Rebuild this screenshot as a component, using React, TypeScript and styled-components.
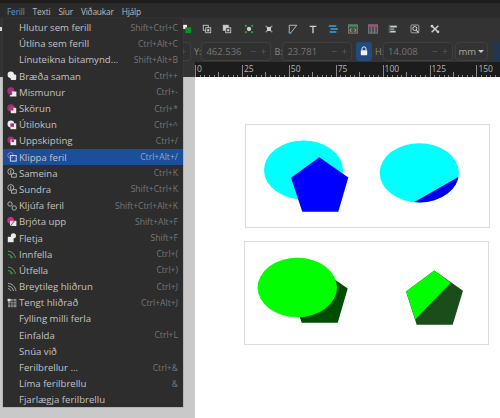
import React from 'react';
import styled, { createGlobalStyle } from 'styled-components';

type TGlyph = 'union' | 'diff' | 'inter' | 'excl' | 'div' | 'clip' | 'comb' | 'split' | 'cut' | 'frag' | 'flat' | 'inset' | 'dyn' | 'link';

interface IMenuItem {
  label: string;
  keys?: string;
  glyph?: TGlyph;
  active?: boolean;
}

const MENU_ITEMS: IMenuItem[] = [
  { label: 'Hlutur sem ferill', keys: 'Shift+Ctrl+C' },
  { label: 'Útlína sem ferill', keys: 'Ctrl+Alt+C' },
  { label: 'Línuteikna bitamynd...', keys: 'Shift+Alt+B' },
  { label: 'Bræða saman', keys: 'Ctrl++', glyph: 'union' },
  { label: 'Mismunur', keys: 'Ctrl+-', glyph: 'diff' },
  { label: 'Skörun', keys: 'Ctrl+*', glyph: 'inter' },
  { label: 'Útilokun', keys: 'Ctrl+^', glyph: 'excl' },
  { label: 'Uppskipting', keys: 'Ctrl+/', glyph: 'div' },
  { label: 'Klippa feril', keys: 'Ctrl+Alt+/', glyph: 'clip', active: true },
  { label: 'Sameina', keys: 'Ctrl+K', glyph: 'comb' },
  { label: 'Sundra', keys: 'Shift+Ctrl+K', glyph: 'split' },
  { label: 'Kljúfa feril', keys: 'Shift+Ctrl+Alt+K', glyph: 'cut' },
  { label: 'Brjóta upp', keys: 'Shift+Alt+F', glyph: 'frag' },
  { label: 'Fletja', keys: 'Shift+F', glyph: 'flat' },
  { label: 'Innfella', keys: 'Ctrl+(', glyph: 'inset' },
  { label: 'Útfella', keys: 'Ctrl+)', glyph: 'inset' },
  { label: 'Breytileg hliðrun', keys: 'Ctrl+J', glyph: 'dyn' },
  { label: 'Tengt hliðrað', keys: 'Ctrl+Alt+J', glyph: 'link' },
  { label: 'Fylling milli ferla' },
  { label: 'Einfalda', keys: 'Ctrl+L' },
  { label: 'Snúa við' },
  { label: 'Ferilbrellur ...', keys: 'Ctrl+&' },
  { label: 'Líma ferilbrellu', keys: '&' },
  { label: 'Fjarlægja ferilbrellu' },
];

const MENU_BAR = ['Ferill', 'Texti', 'Síur', 'Viðaukar', 'Hjálp'];

function MenuGlyph({ kind }: { kind: TGlyph }) {
  const pink = '#a82c74';
  const white = '#ececec';
  const line = '#b8b8b8';
  let body: React.ReactNode = null;
  if (kind === 'union') {
    body = <><circle cx="3.8" cy="3.8" r="3.2" fill={white} /><rect x="3.6" y="3.6" width="5.6" height="5.4" rx="1" fill={white} /></>;
  } else if (kind === 'diff') {
    body = <><circle cx="3.9" cy="3.9" r="3.6" fill={pink} /><path d="M4.4 4.4h5v5h-6.6v-1.2c1.5 0 2.4-.8 2.6-2z" fill={white} /></>;
  } else if (kind === 'inter') {
    body = <><circle cx="4" cy="4" r="3.7" fill={pink} /><rect x="3.8" y="3.8" width="5.4" height="5.4" fill="#e8e8e8" /><rect x="3.8" y="3.8" width="2.6" height="2.6" fill={pink} /></>;
  } else if (kind === 'excl') {
    body = <><circle cx="3.9" cy="3.9" r="3.4" fill={white} /><rect x="3.4" y="3.4" width="5.8" height="5.8" fill={white} /><rect x="3.4" y="3.4" width="3.6" height="3.4" fill={pink} /></>;
  } else if (kind === 'div') {
    body = <><circle cx="3.8" cy="3.8" r="3.4" fill={pink} /><rect x="3.5" y="3.5" width="5.7" height="5.7" fill={white} /><rect x="4.5" y="3.5" width="2.6" height="2.6" fill={pink} /></>;
  } else if (kind === 'clip') {
    body = <><circle cx="3.6" cy="3.4" r="2.8" fill="none" stroke="#b26ad8" strokeWidth="1" /><rect x="3.4" y="3.5" width="5.8" height="5.6" fill="none" stroke="#cfe0f5" strokeWidth="1" /></>;
  } else if (kind === 'comb' || kind === 'split') {
    body = <><circle cx="3.8" cy="3.6" r="3" fill="none" stroke={line} strokeWidth="0.9" /><path d="M3.8 1.8v4.4M5.4 5.6h3.9v3.6h-4.8V7" fill="none" stroke={line} strokeWidth="0.9" /></>;
  } else if (kind === 'cut') {
    body = <><circle cx="3" cy="3" r="2.2" fill="none" stroke={line} strokeWidth="0.9" /><circle cx="7.2" cy="7" r="2.2" fill="none" stroke={line} strokeWidth="0.9" /></>;
  } else if (kind === 'frag') {
    body = <><circle cx="3.6" cy="3.4" r="3.3" fill="#d02a8c" /><rect x="3" y="3.8" width="6.4" height="5.2" fill={white} /><path d="M3 9l4-5.2h1L4 9z" fill={pink} /></>;
  } else if (kind === 'flat') {
    body = <><circle cx="6.4" cy="2.8" r="2.6" fill={white} /><rect x="0.8" y="3.8" width="5.8" height="5.4" fill={white} /></>;
  } else if (kind === 'inset') {
    body = <><path d="M1 2.2c3.6 0 6.6 2.8 7.4 6.6" fill="none" stroke="#8c8c8c" strokeWidth="1" /><path d="M1 5c2.4 0 4.6 1.8 5.2 4.2H3.6L2.8 6.8 1 6z" fill="#2f8f3a" /></>;
  } else if (kind === 'dyn') {
    body = <><path d="M1 1.4c4 0 7.2 3.2 8 7.6M1 4c2.8 0 5 2.2 5.6 5M1 6.6c1.4 0 2.6 1.2 3 2.6" fill="none" stroke="#a8a8a8" strokeWidth="1" /></>;
  } else if (kind === 'link') {
    body = <><rect x="1" y="1" width="8.4" height="8.2" fill="#8e8e8e" /><path d="M1 3.4h8.4M1 6h8.4M3.6 1v8.2M6.2 1v8.2" stroke="#2c2c2c" strokeWidth="0.7" /><rect x="0.6" y="0.8" width="3" height="2.6" fill="#e0e0e0" /></>;
  }
  return <svg width="10" height="10" viewBox="0 0 10 10">{body}</svg>;
}

type TTool = 'stack' | 'up' | 'down' | 'nodes' | 'nodes2' | 'pen' | 'text' | 'layers' | 'xml' | 'panel' | 'align' | 'find' | 'prefs';

function ToolGlyph({ kind }: { kind: TTool }) {
  const light = '#cfcfcf';
  let body: React.ReactNode = null;
  if (kind === 'stack') {
    body = <><rect x="1" y="1" width="5" height="5" fill="#ececec" /><rect x="4" y="4" width="7" height="7" fill="#0f8f28" /></>;
  } else if (kind === 'up' || kind === 'down') {
    body = <><rect x="1.5" y="1.5" width="6" height="6" fill={kind === 'up' ? 'none' : light} stroke={light} /><rect x="4.5" y="4.5" width="6" height="6" fill="#333" stroke={light} /><rect x="6.2" y="6.2" width="2.6" height="2.6" fill={light} /></>;
  } else if (kind === 'nodes') {
    body = <><rect x="1" y="1" width="2.4" height="2.4" fill="#2a9a46" /><rect x="8.6" y="1" width="2.4" height="2.4" fill="#2a9a46" /><rect x="1" y="8.6" width="2.4" height="2.4" fill="#2a9a46" /><rect x="8.6" y="8.6" width="2.4" height="2.4" fill="#2a9a46" /><circle cx="6" cy="6" r="2.6" fill={light} /></>;
  } else if (kind === 'nodes2') {
    body = <><path d="M2 2l8 8M10 2l-8 8" stroke="#8c8c8c" strokeWidth="1.6" /><rect x="3.6" y="3.6" width="4.8" height="4.8" fill={light} /></>;
  } else if (kind === 'pen') {
    body = <><path d="M1.5 1.5h9L7 6 3 11H1.5z" fill="none" stroke={light} strokeWidth="1" /><path d="M1.5 7v4H4" fill="none" stroke="#3a9ad0" strokeWidth="1.2" /></>;
  } else if (kind === 'text') {
    body = <path d="M2 2h8v1.6H6.8V11H5.2V3.6H2z" fill={light} />;
  } else if (kind === 'layers') {
    body = <path d="M1 2.5h9M3 6h9M2 9.5h8" stroke="#39a0dc" strokeWidth="1.8" />;
  } else if (kind === 'xml') {
    body = <><rect x="0.5" y="1" width="11" height="10" fill="#4c4c4c" stroke="#808080" /><rect x="0.5" y="1" width="11" height="2.2" fill="#2a9a46" /><path d="M4 5.5L2.6 7.5 4 9.4M8 5.5l1.4 2L8 9.4" fill="none" stroke={light} strokeWidth="0.9" /></>;
  } else if (kind === 'panel') {
    body = <><rect x="0.5" y="1" width="11" height="10" fill="#4c4c4c" stroke="#808080" /><rect x="0.5" y="1" width="11" height="2.2" fill="#c0408a" /><path d="M4 3.4V11M8 3.4V11" stroke="#909090" /></>;
  } else if (kind === 'align') {
    body = <><path d="M1.5 1v10" stroke="#2a9a46" strokeWidth="1.2" /><rect x="2.6" y="2" width="8" height="2.2" fill={light} /><rect x="2.6" y="5.2" width="5" height="2.2" fill="#909090" /><rect x="2.6" y="8.2" width="6.6" height="2" fill={light} /></>;
  } else if (kind === 'find') {
    body = <><rect x="1.2" y="1.2" width="9.4" height="9.4" rx="1" fill="none" stroke="#a0a0a0" strokeWidth="1.2" /><circle cx="5.8" cy="5.4" r="2.4" fill="none" stroke={light} strokeWidth="1.2" /><path d="M7.4 7.4l3 3" stroke={light} strokeWidth="1.3" /></>;
  } else {
    body = <><path d="M2 2l8 8M10 2l-8 8" stroke={light} strokeWidth="1.8" /><circle cx="2.4" cy="2.6" r="1.6" fill={light} /><circle cx="9.6" cy="9.4" r="1.6" fill={light} /></>;
  }
  return <svg width="10" height="10" viewBox="0 0 12 12">{body}</svg>;
}

const TOOL_GROUPS: { before: number; tools: TTool[] }[] = [
  { before: 0, tools: ['stack', 'up', 'down'] },
  { before: 2, tools: ['nodes', 'nodes2'] },
  { before: 4, tools: ['pen', 'text', 'layers', 'xml', 'panel', 'align'] },
  { before: 2, tools: ['find', 'prefs'] },
];

const Spinner = ({ label, value }: { label: string; value: string }) => (
  <>
    <FieldLabel>{label}</FieldLabel>
    <Field $width={70}>
      <FieldValue>{value}</FieldValue>
      <SpinButton>−</SpinButton>
      <SpinButton>+</SpinButton>
    </Field>
  </>
);

const RULER_MARKS = [0, 25, 50, 75, 100, 125, 150];
const RULER_STEP = 46.9;

function RulerTicks() {
  const ticks = [];
  for (let i = 0; i <= 65; i += 1) {
    const x = Math.round((i * RULER_STEP) / 10) + 0.5;
    const top = i % 10 === 0 ? 3 : i % 5 === 0 ? 10 : 13;
    ticks.push(<line key={i} x1={x} x2={x} y1={top} y2={15} stroke="#8a8a8a" strokeWidth="1" />);
  }
  return (
    <svg width="305" height="15">
      {ticks}
      {RULER_MARKS.map((mark, index) => (
        <text key={mark} x={index * RULER_STEP + 2} y="10" fill="#b4b4b4" fontSize="8.5" fontFamily="'Open Sans', sans-serif">{mark}</text>
      ))}
    </svg>
  );
}

const BLUE_PENTAGON = '319.3,156.7 348.3,177 338.3,211.3 302.3,211.3 291,177.3';
const DARK_PENTAGON = '318.7,267.7 347.7,288 337.7,322.3 301.7,322.3 290.4,288.3';
const RIGHT_PENTAGON = '434.3,270 463,290.3 452.7,324.3 416.7,324.3 406,291';

function App() {
  return (
    <Page>
      <GlobalStyle />
      <TitleStrip />
      <MenuBar>
        {MENU_BAR.map((name, index) => (
          <MenuBarItem key={name} $open={index === 0}>{name}</MenuBarItem>
        ))}
      </MenuBar>
      <ToolRow>
        <ToolSliver />
        {TOOL_GROUPS.map((group) => (
          <ToolGroup key={group.tools[0]} $before={group.before}>
            {group.tools.map((tool) => (
              <ToolCell key={tool}><ToolGlyph kind={tool} /></ToolCell>
            ))}
          </ToolGroup>
        ))}
      </ToolRow>
      <ControlRow>
        <Field $width={19}>
          <FieldValue />
          <SpinButton>+</SpinButton>
        </Field>
        <Spinner label="Y:" value="462.536" />
        <Spinner label="B:" value="23.781" />
        <LockButton>
          <svg width="8" height="10" viewBox="0 0 8 10">
            <path d="M2 4.4V2.8a2 2 0 0 1 4 0v1.6" fill="none" stroke="#f0f0f0" strokeWidth="1" />
            <rect x="0.8" y="4.2" width="6.4" height="5" rx="0.6" fill="#f0f0f0" />
          </svg>
        </LockButton>
        <Spinner label="H:" value="14.008" />
        <UnitSelect>mm<Caret /></UnitSelect>
        <EdgeButton />
      </ControlRow>
      <RulerRow>
        <RulerCorner />
        <RulerTicks />
      </RulerRow>
      <Workspace>
        <Gutter />
        <Sheet>
          <Frame $inset={1}>
            <svg width="243" height="102" viewBox="246 124.5 243 102">
              <defs>
                <clipPath id="oval-right"><ellipse cx="419.3" cy="172.3" rx="39.6" ry="29.6" /></clipPath>
              </defs>
              <ellipse cx="303.5" cy="169.5" rx="39.5" ry="29.5" fill="#00ffff" />
              <polygon points={BLUE_PENTAGON} fill="#0000ff" />
              <ellipse cx="419.3" cy="172.3" rx="39.6" ry="29.6" fill="#00ffff" />
              <polygon points="458.6,176.3 414,201.7 470,215" fill="#0000e6" clipPath="url(#oval-right)" />
            </svg>
          </Frame>
          <Frame $inset={0}>
            <svg width="243" height="102" viewBox="245 241.5 243 102">
              <polygon points={DARK_PENTAGON} fill="#004d00" />
              <ellipse cx="297.3" cy="287" rx="39.7" ry="29.7" fill="#00ff00" />
              <polygon points={RIGHT_PENTAGON} fill="#1a4d1a" />
              <polygon points="434.3,270 450.7,282.3 415.3,319 406,291" fill="#00ff00" />
            </svg>
          </Frame>
        </Sheet>
      </Workspace>
      <Dropdown>
        {MENU_ITEMS.map((item) => (
          <MenuRow key={item.label} $active={item.active}>
            <GlyphSlot>{item.glyph && <MenuGlyph kind={item.glyph} />}</GlyphSlot>
            <MenuLabel>{item.label}</MenuLabel>
            <MenuKeys $active={item.active}>{item.keys}</MenuKeys>
          </MenuRow>
        ))}
      </Dropdown>
    </Page>
  );
}

const GlobalStyle = createGlobalStyle`
  html, body {
    margin: 0;
    padding: 0;
    background: #c9c9c9;
    overflow: hidden;
  }
`;
const Page = styled.div`
  position: relative;
  display: flex;
  flex-direction: column;
  width: 500px;
  height: 418px;
  overflow: hidden;
  background: #333;
  font-family: 'Open Sans', 'Noto Sans', sans-serif;
`;
const TitleStrip = styled.div`
  flex: none;
  height: 3px;
  background: #1e1c1a;
`;
const MenuBar = styled.div`
  flex: none;
  display: flex;
  gap: 8px;
  height: 15px;
  padding-left: 7px;
  background: #2b2b2b;
  align-items: center;
`;
const MenuBarItem = styled.span<{ $open?: boolean }>`
  font-size: 8.4px;
  letter-spacing: -0.2px;
  padding-top: 1px;
  color: ${(props) => (props.$open ? '#5c93dc' : '#bdbdbd')};
`;
const ToolRow = styled.div`
  flex: none;
  display: flex;
  height: 22px;
  background: #333;
`;
const ToolSliver = styled.div`
  flex: none;
  align-self: center;
  width: 2px;
  height: 4px;
  margin-right: 175px;
  background: #d8d8d8;
`;
const ToolGroup = styled.div<{ $before: number }>`
  display: flex;
  margin-left: ${(props) => props.$before}px;
`;
const ToolCell = styled.div`
  display: flex;
  align-items: center;
  justify-content: center;
  width: 20px;
  height: 22px;
`;
const ControlRow = styled.div`
  flex: none;
  display: flex;
  align-items: center;
  height: 22px;
  padding-left: 172px;
  background: #333;
`;
const FieldLabel = styled.span`
  width: 11px;
  padding-left: 3px;
  box-sizing: border-box;
  font-size: 9px;
  color: #858585;
`;
const Field = styled.div<{ $width: number }>`
  display: flex;
  flex: none;
  align-items: center;
  box-sizing: border-box;
  width: ${(props) => props.$width}px;
  height: 19px;
  padding: 0 2px 0 4px;
  border: 1px solid #3f3f3f;
  border-radius: 4px;
  background: #303030;
`;
const FieldValue = styled.span`
  flex: 1;
  font-size: 9.5px;
  color: #757575;
`;
const SpinButton = styled.span`
  width: 10px;
  text-align: center;
  font-size: 10px;
  color: #5a5a5a;
`;
const LockButton = styled.div`
  display: flex;
  align-items: center;
  justify-content: center;
  width: 17px;
  height: 19px;
  margin-left: 4px;
  border-radius: 3px;
  background: #234a7f;
`;
const UnitSelect = styled.div`
  display: flex;
  align-items: center;
  justify-content: center;
  gap: 2px;
  box-sizing: border-box;
  width: 35px;
  height: 19px;
  margin-left: 2px;
  border: 1px solid #3f3f3f;
  border-radius: 4px;
  font-size: 9.5px;
  color: #a8a8a8;
`;
const Caret = styled.span`
  width: 0;
  height: 0;
  border-left: 3px solid transparent;
  border-right: 3px solid transparent;
  border-top: 3px solid #c8c8c8;
`;
const EdgeButton = styled.div`
  width: 8px;
  height: 19px;
  margin-left: 5px;
  border-radius: 3px 0 0 3px;
  background: #24364f;
`;
const RulerRow = styled.div`
  flex: none;
  display: flex;
  height: 15px;
  background: #1c1c1c;
  overflow: hidden;
`;
const RulerCorner = styled.div`
  flex: none;
  width: 195px;
  background: #333;
`;
const Workspace = styled.div`
  flex: 1;
  display: flex;
  min-height: 0;
`;
const Gutter = styled.div`
  flex: none;
  width: 195px;
  background: #c9c9c9;
`;
const Sheet = styled.div`
  flex: 1;
  display: flex;
  flex-direction: column;
  gap: 13px;
  padding: 46.5px 0 0 49px;
  background: #fff;
`;
const Frame = styled.div<{ $inset: number }>`
  display: flex;
  box-sizing: border-box;
  width: 245px;
  height: 104px;
  margin-left: ${(props) => props.$inset}px;
  border: 1px solid #dcdcdc;
`;
const Dropdown = styled.div`
  position: absolute;
  top: 18px;
  left: 3px;
  box-sizing: border-box;
  width: 180px;
  height: 389px;
  padding-top: 1.5px;
  overflow: hidden;
  background: #2d2d2d;
  box-shadow: 0 0 1px #555;
`;
const MenuRow = styled.div<{ $active?: boolean }>`
  display: flex;
  align-items: center;
  height: 16.2px;
  padding: 0 5px 0 4px;
  background: ${(props) => (props.$active ? '#1b4f9b' : 'transparent')};
`;
const GlyphSlot = styled.span`
  flex: none;
  display: flex;
  align-items: center;
  width: 12px;
  height: 10px;
`;
const MenuLabel = styled.span`
  flex: 1;
  font-size: 9.6px;
  white-space: nowrap;
  color: #c2c2c2;
`;
const MenuKeys = styled.span<{ $active?: boolean }>`
  font-size: 8.6px;
  white-space: nowrap;
  color: ${(props) => (props.$active ? '#8fa7c9' : '#767676')};
`;

export default App;
